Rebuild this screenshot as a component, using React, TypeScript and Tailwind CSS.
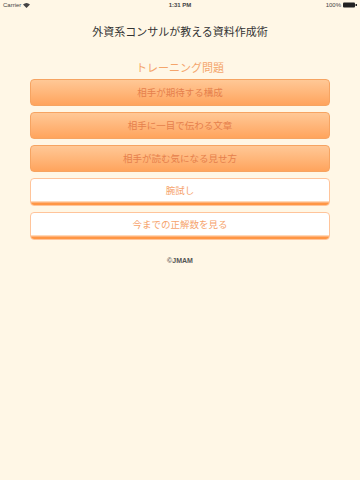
import React from 'react';

const FONT = { fontFamily: '"Noto Sans CJK JP", "Liberation Sans", sans-serif' };

const trainings = ['相手が期待する構成', '相手に一目で伝わる文章', '相手が読む気になる見せ方'];
const others = ['腕試し', '今までの正解数を見る'];

function StatusBar() {
  return (
    <div className="flex h-[10px] items-center justify-between px-[3px] text-[6px] text-[#444]" style={{ fontFamily: '"Liberation Sans", sans-serif' }}>
      <div className="flex w-[70px] items-center gap-[2px]">
        <span>Carrier</span>
        <svg width="7" height="5" viewBox="0 0 14 10">
          <path d="M7 10 L0 3 Q7 -3 14 3 Z" fill="#444" />
        </svg>
      </div>
      <span className="font-bold">1:31 PM</span>
      <div className="flex w-[70px] items-center justify-end gap-[2px]">
        <span>100%</span>
        <svg width="14" height="6" viewBox="0 0 14 6" className="shrink-0">
          <rect x="0" y="0.5" width="12" height="5" rx="1" fill="#222" />
          <rect x="12.5" y="2" width="1.5" height="2" fill="#222" />
        </svg>
      </div>
    </div>
  );
}

export default function App() {
  return (
    <div className="h-[480px] w-[360px] bg-[#fff7e6]" style={FONT}>
      <StatusBar />
      <h1 className="mt-[14px] text-center text-[11px] leading-[14px] text-[#333]">外資系コンサルが教える資料作成術</h1>
      <div className="mt-[22px] text-center text-[11px] leading-[14px] text-[#f4a56b]">トレーニング問題</div>

      <div className="mx-[30px] mt-[5px] flex flex-col gap-[6px]">
        {trainings.map((t) => (
          <div
            key={t}
            className="flex h-[27px] items-center justify-center rounded-[4px] border border-[#f6a462] bg-gradient-to-b from-[#ffc896] to-[#ffa45c] text-[9.5px] text-[#e6804c]"
          >
            {t}
          </div>
        ))}
        {others.map((t) => (
          <div
            key={t}
            className="flex h-[28px] flex-col overflow-hidden rounded-[4px] border border-[#ffc49a] bg-white"
          >
            <div className="flex flex-1 items-center justify-center text-[9.5px] text-[#f6a36c]">{t}</div>
            <div className="h-[1px] bg-[#ffd9b8]" />
            <div className="h-[1px] bg-[#ffb27a]" />
            <div className="h-[2px] bg-[#ff9644]" />
          </div>
        ))}
      </div>

      <div className="mt-[16px] text-center text-[7px] font-bold text-[#555]" style={{ fontFamily: '"Liberation Sans", sans-serif' }}>
        ©JMAM
      </div>
    </div>
  );
}
